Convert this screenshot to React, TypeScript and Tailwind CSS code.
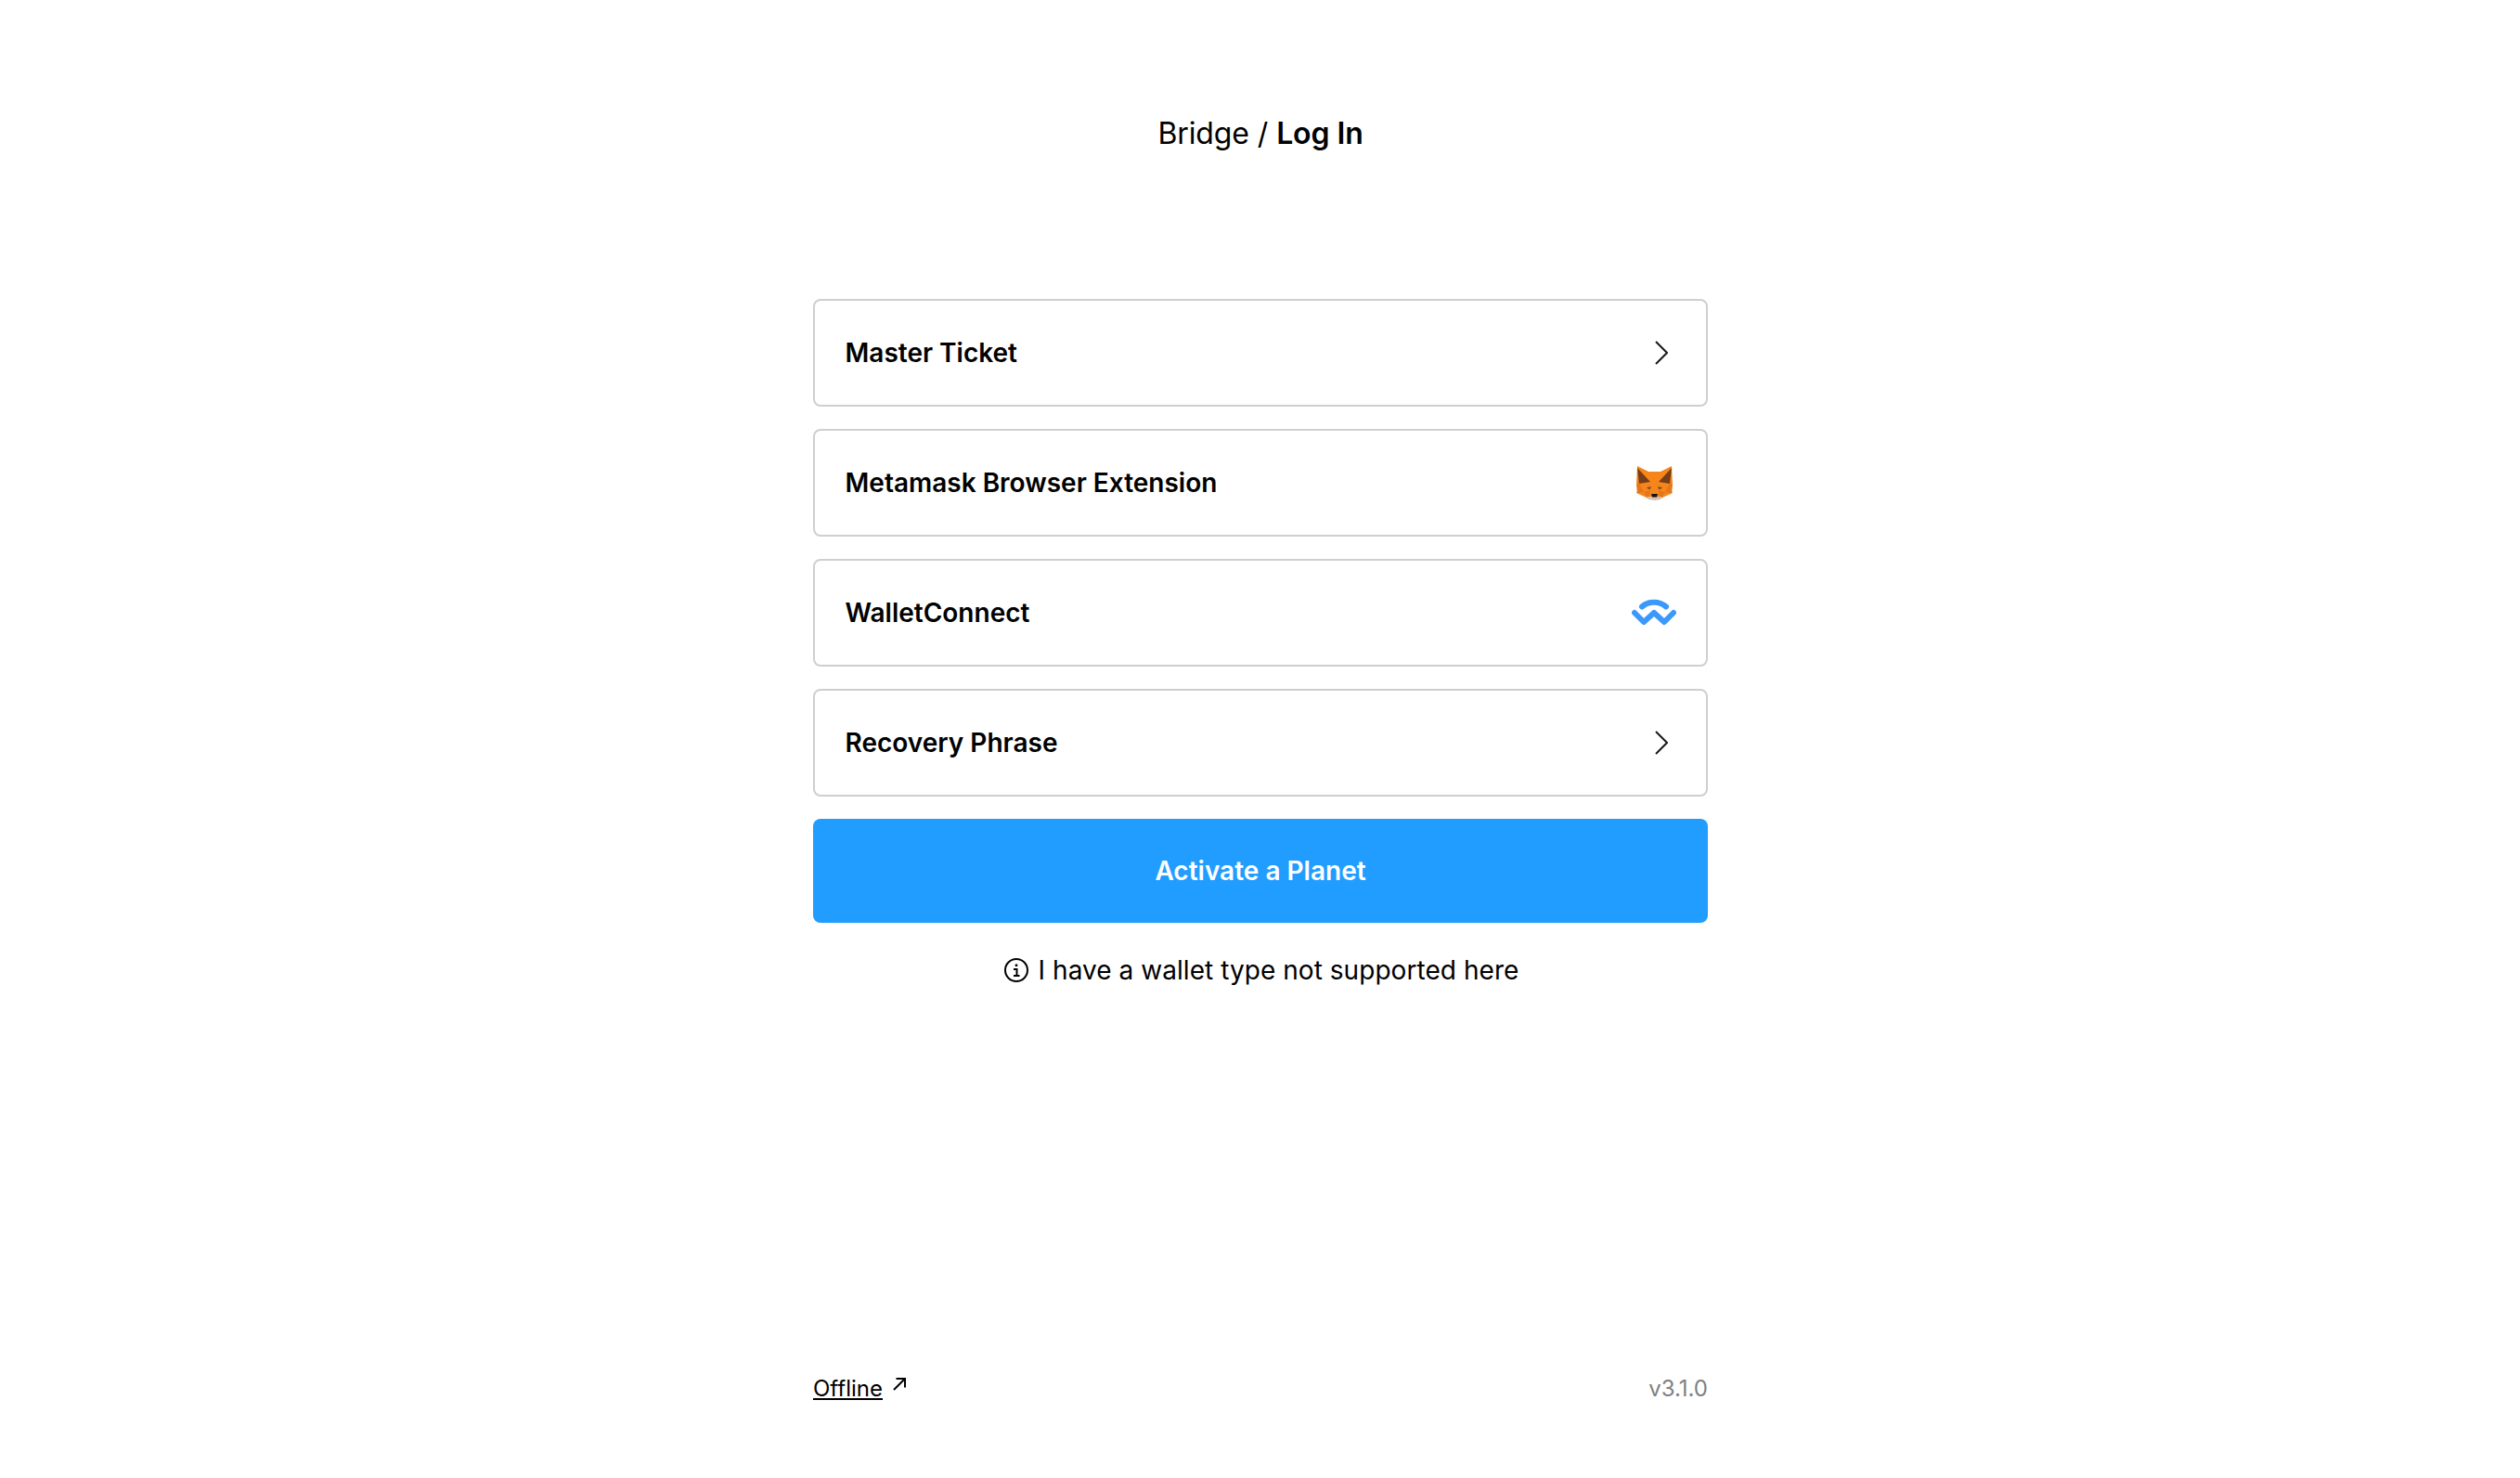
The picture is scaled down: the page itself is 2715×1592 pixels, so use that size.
import React from "react";

const Chevron = () => (
  <svg width="14" height="26" viewBox="0 0 14 26" fill="none" className="mr-[9px]">
    <path d="M1 1L13 13L1 25" stroke="#1a1a1a" strokeWidth="2" />
  </svg>
);

// fox head, traced from the reference
const Fox = () => (
  <svg width="39" height="37" viewBox="0 0 39 37" className="mr-[4px]">
    <path d="M1 0L13 6H26L38 0L39 20L37 24L39 29L28 34L25 36H14L11 34L0 29L2 24L0 20Z" fill="#f6851b" />
    <path d="M1 2L15 17L3 19Z" fill="#763d16" />
    <path d="M38 2L24 17L36 19Z" fill="#763d16" />
    <path d="M0 20L3 19L8 28L1 29Z" fill="#e4761b" />
    <path d="M39 20L36 19L31 28L38 29Z" fill="#e4761b" />
    <path d="M8 28L15 26L14 33L11 33Z" fill="#e2761b" />
    <path d="M31 28L24 26L25 33L28 33Z" fill="#e2761b" />
    <path d="M11 23L16 22L15 25L13 25Z" fill="#8a4f1d" />
    <path d="M28 23L23 22L24 25L26 25Z" fill="#8a4f1d" />
    <path d="M12 33L16 33H23L27 33L26 36L19.5 37L13 36Z" fill="#d7c1b3" />
    <path d="M16 30H23L22 33.5H17Z" fill="#161616" />
  </svg>
);

const WalletConnectLogo = () => (
  <svg width="48" height="30" viewBox="0 0 48 30" fill="none">
    <path d="M11 8.5C18 2 30 2 37 8.5" stroke="#3b99fc" strokeWidth="6" strokeLinecap="round" />
    <path d="M3 15L13 25L24 15L35 25L45 15" stroke="#3b99fc" strokeWidth="6" strokeLinecap="round" strokeLinejoin="round" />
  </svg>
);

const InfoIcon = () => (
  <svg width="26" height="26" viewBox="0 0 26 26" fill="none">
    <circle cx="13" cy="13" r="12" stroke="#000" strokeWidth="2" />
    <path d="M13 6.5V9" stroke="#000" strokeWidth="2.5" />
    <path d="M10 12H13.5V19M10 19H16.5" stroke="#000" strokeWidth="2" />
  </svg>
);

const ArrowIcon = () => (
  <svg width="16" height="16" viewBox="0 0 16 16" fill="none">
    <path d="M2 14L14 2M4.5 2H14V11.5" stroke="#000" strokeWidth="2" />
  </svg>
);

function Row({ label, children }: { label: string; children: React.ReactNode }) {
  return (
    <div className="flex h-[116px] items-center justify-between rounded-[8px] border-2 border-[#cfcfcf] bg-white pl-[32.5px] pr-[32px]">
      <span className="text-[28px] font-semibold leading-none text-black">{label}</span>
      {children}
    </div>
  );
}

export default function App() {
  return (
    <div className="flex h-screen flex-col items-center bg-white pl-[1px] font-['Inter',sans-serif] text-black">
      <h1 className="mt-[124px] text-[32px] font-normal leading-[40px] tracking-[-0.1px]">
        Bridge / <span className="font-semibold">Log In</span>
      </h1>
      <div className="mt-[158px] flex w-[964px] flex-col gap-[24px]">
        <Row label="Master Ticket"><Chevron /></Row>
        <Row label="Metamask Browser Extension"><Fox /></Row>
        <Row label="WalletConnect"><WalletConnectLogo /></Row>
        <Row label="Recovery Phrase"><Chevron /></Row>
        <button className="flex h-[112px] items-center justify-center rounded-[8px] bg-[#219dff] text-[28px] font-semibold text-white">
          Activate a Planet
        </button>
        <div className="mt-[7px] flex items-center justify-center gap-[11px] pl-[2px] text-[28px] leading-[40px] tracking-[0.05px]">
          <InfoIcon />
          <span>I have a wallet type not supported here</span>
        </div>
      </div>
      <div className="mt-auto mb-[80px] flex w-[964px] items-center justify-between text-[24px] leading-[32px]">
        <div className="flex items-start gap-[10px]">
          <span className="underline">Offline</span>
          <span className="mt-[3px]"><ArrowIcon /></span>
        </div>
        <span className="text-[#7f7f7f]">v3.1.0</span>
      </div>
    </div>
  );
}
